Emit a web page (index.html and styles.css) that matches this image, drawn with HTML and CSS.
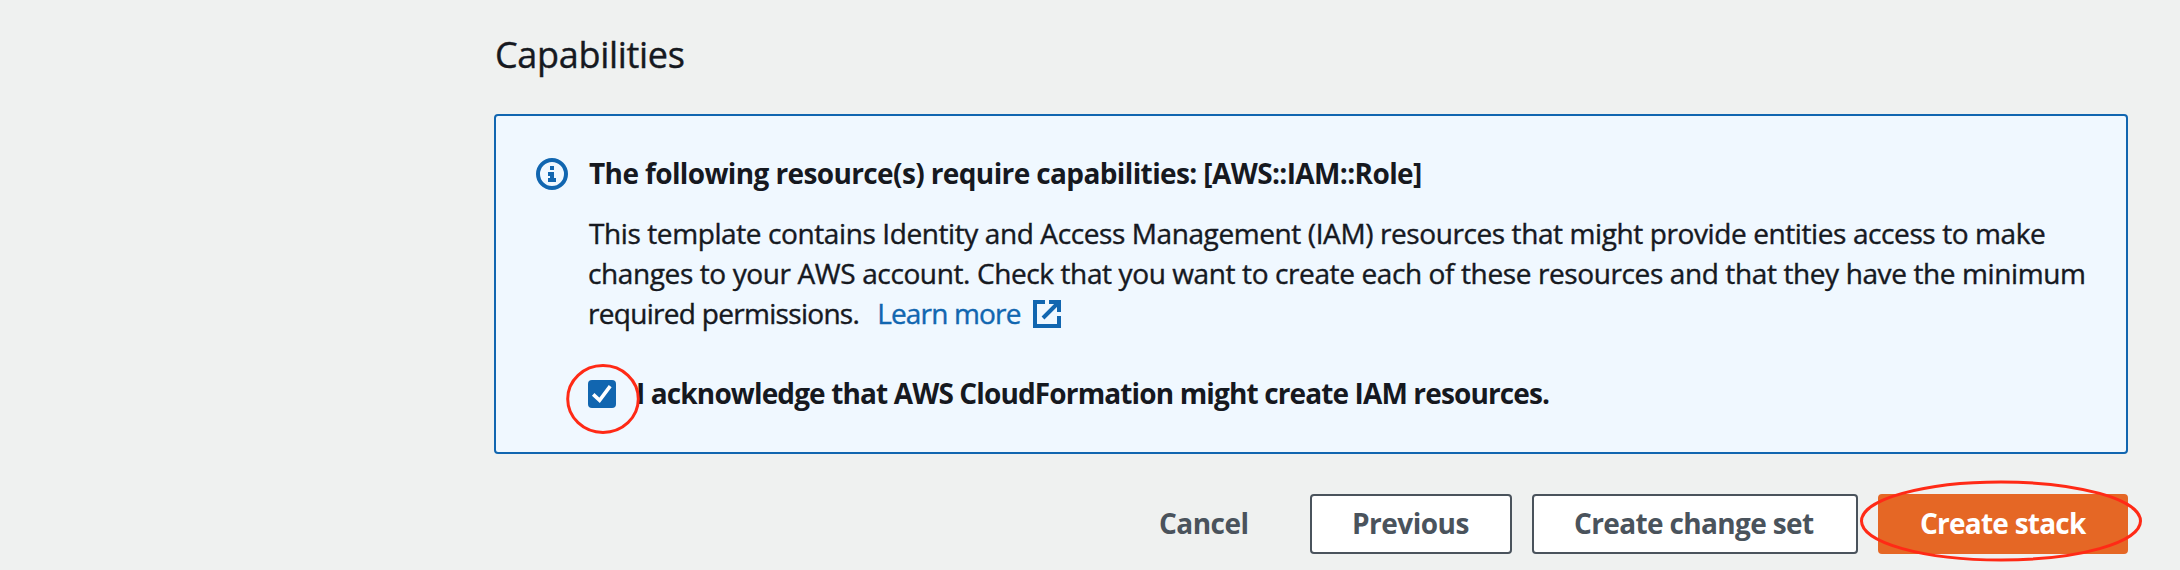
FILE: index.html
```html
<!DOCTYPE html>
<html lang="en">
<head>
<meta charset="utf-8">
<title>Create stack</title>
<link rel="stylesheet" href="styles.css">
</head>
<body>
<main class="page">
  <h2 class="title">Capabilities</h2>
  <section class="alert">
    <svg class="info-icon" viewBox="0 0 32 32" aria-hidden="true">
      <circle cx="16" cy="16" r="14" fill="none" stroke="currentColor" stroke-width="4"/>
      <path fill="currentColor" d="M14 8h4v4h-4zM12 14h6v6h2v4h-8v-4h2v-2h-2z"/>
    </svg>
    <div class="alert-content">
      <h3 class="alert-header">The following resource(s) require capabilities: [AWS::IAM::Role]</h3>
      <p class="alert-text">
        <span class="line line-first">This template contains Identity and Access Management (IAM) resources that might provide entities access to make</span>
        <span class="line line-second">changes to your AWS account. Check that you want to create each of these resources and that they have the minimum</span>
        <span class="line line-last"><span class="sentence-end">required permissions.</span><a class="learn-more">Learn more<svg class="external-icon" viewBox="0 0 28 28" aria-hidden="true"><path fill="none" stroke="currentColor" stroke-width="4" d="M12 2H2v24h24V16M16 2h10v10M25 3 10 18"/></svg></a></span>
      </p>
      <label class="acknowledge">
        <span class="checkbox">
          <svg class="check" viewBox="0 0 28 28" aria-hidden="true"><path fill="none" stroke="#fff" stroke-width="3.6" d="M5.2 14.4 11.6 20.4 22.2 6.2"/></svg>
          <svg class="mark mark-checkbox" viewBox="0 0 76 72" aria-hidden="true"><ellipse cx="38" cy="36" rx="35.3" ry="33.4"/></svg>
        </span>
        <span class="ack-text">I acknowledge that AWS CloudFormation might create IAM resources.</span>
      </label>
    </div>
  </section>
  <div class="actions">
    <a class="button cancel">Cancel</a>
    <a class="button previous">Previous</a>
    <a class="button change-set">Create change set</a>
    <a class="button create"><span class="create-text">Create stack</span>
      <svg class="mark mark-create" viewBox="0 0 284 84" aria-hidden="true"><ellipse cx="142" cy="42" rx="139.5" ry="39"/></svg>
    </a>
  </div>
</main>
</body>
</html>
```
FILE: styles.css
```css
* { box-sizing: border-box; }
body {
  margin: 0;
  background: #eff1f0;
  color: #16191f;
  font-family: "Open Sans", "Noto Sans", sans-serif;
  font-size: 28px;
  line-height: 40px;
}
.page {
  height: 570px;
  overflow: hidden;
  padding: 33px 52px 0 494px;
}
.title {
  margin: 0 0 37px;
  padding-left: 1px;
  font-size: 36px;
  font-weight: 400;
  line-height: 44px;
  letter-spacing: -0.31px;
  -webkit-text-stroke: 0.4px currentColor;
}
.alert {
  display: flex;
  gap: 20px;
  height: 340px;
  padding: 37px 0 0 40px;
  border: 2px solid #1166b0;
  border-radius: 4px;
  background: #f0f8ff;
}
.info-icon {
  flex: none;
  width: 32px;
  height: 32px;
  margin-top: 5px;
  color: #1166b0;
}
.alert-content { white-space: nowrap; }
.alert-header {
  margin: 0 0 20px;
  padding-left: 1px;
  font-size: 28px;
  font-weight: 700;
  letter-spacing: -0.617px;
}
.alert-text {
  margin: 0 0 40px;
  -webkit-text-stroke: 0.4px currentColor;
}
.line { display: block; }
.line-first { padding-left: 1px; letter-spacing: -0.401px; }
.line-second { letter-spacing: -0.386px; }
.line-last {
  display: flex;
  gap: 18px;
  letter-spacing: -0.7px;
}
.learn-more {
  display: flex;
  align-items: center;
  gap: 12px;
  color: #1166b0;
  letter-spacing: -0.833px;
}
.external-icon { width: 28px; height: 28px; margin-top: 1px; }
.acknowledge {
  display: flex;
  align-items: center;
  gap: 20px;
  font-weight: 700;
  letter-spacing: -0.87px;
}
.checkbox {
  position: relative;
  width: 28px;
  height: 28px;
  margin-top: 2px;
  border-radius: 4px;
  background: #1166b0;
}
.check { display: block; width: 28px; height: 28px; }
.mark {
  position: absolute;
  fill: none;
  stroke: #ff2a16;
  stroke-width: 3px;
}
.mark-checkbox { left: -23px; top: -17px; width: 76px; height: 72px; }
.actions {
  display: flex;
  justify-content: flex-end;
  gap: 20px;
  margin-top: 40px;
  white-space: nowrap;
}
.button {
  height: 60px;
  padding: 7px 0 0 40px;
  border: 2px solid #4a535c;
  border-radius: 4px;
  background: #fff;
  color: #4a535c;
  font-weight: 700;
}
.cancel {
  width: 173px;
  border-color: transparent;
  background: none;
  letter-spacing: -0.52px;
}
.previous { width: 202px; letter-spacing: -0.507px; }
.change-set { width: 326px; letter-spacing: -0.637px; }
.create {
  position: relative;
  width: 250px;
  border-color: #e56725;
  background: #e56725;
  color: #fff;
  letter-spacing: -0.76px;
}
.mark-create { left: -21px; top: -17px; width: 284px; height: 84px; }
```
